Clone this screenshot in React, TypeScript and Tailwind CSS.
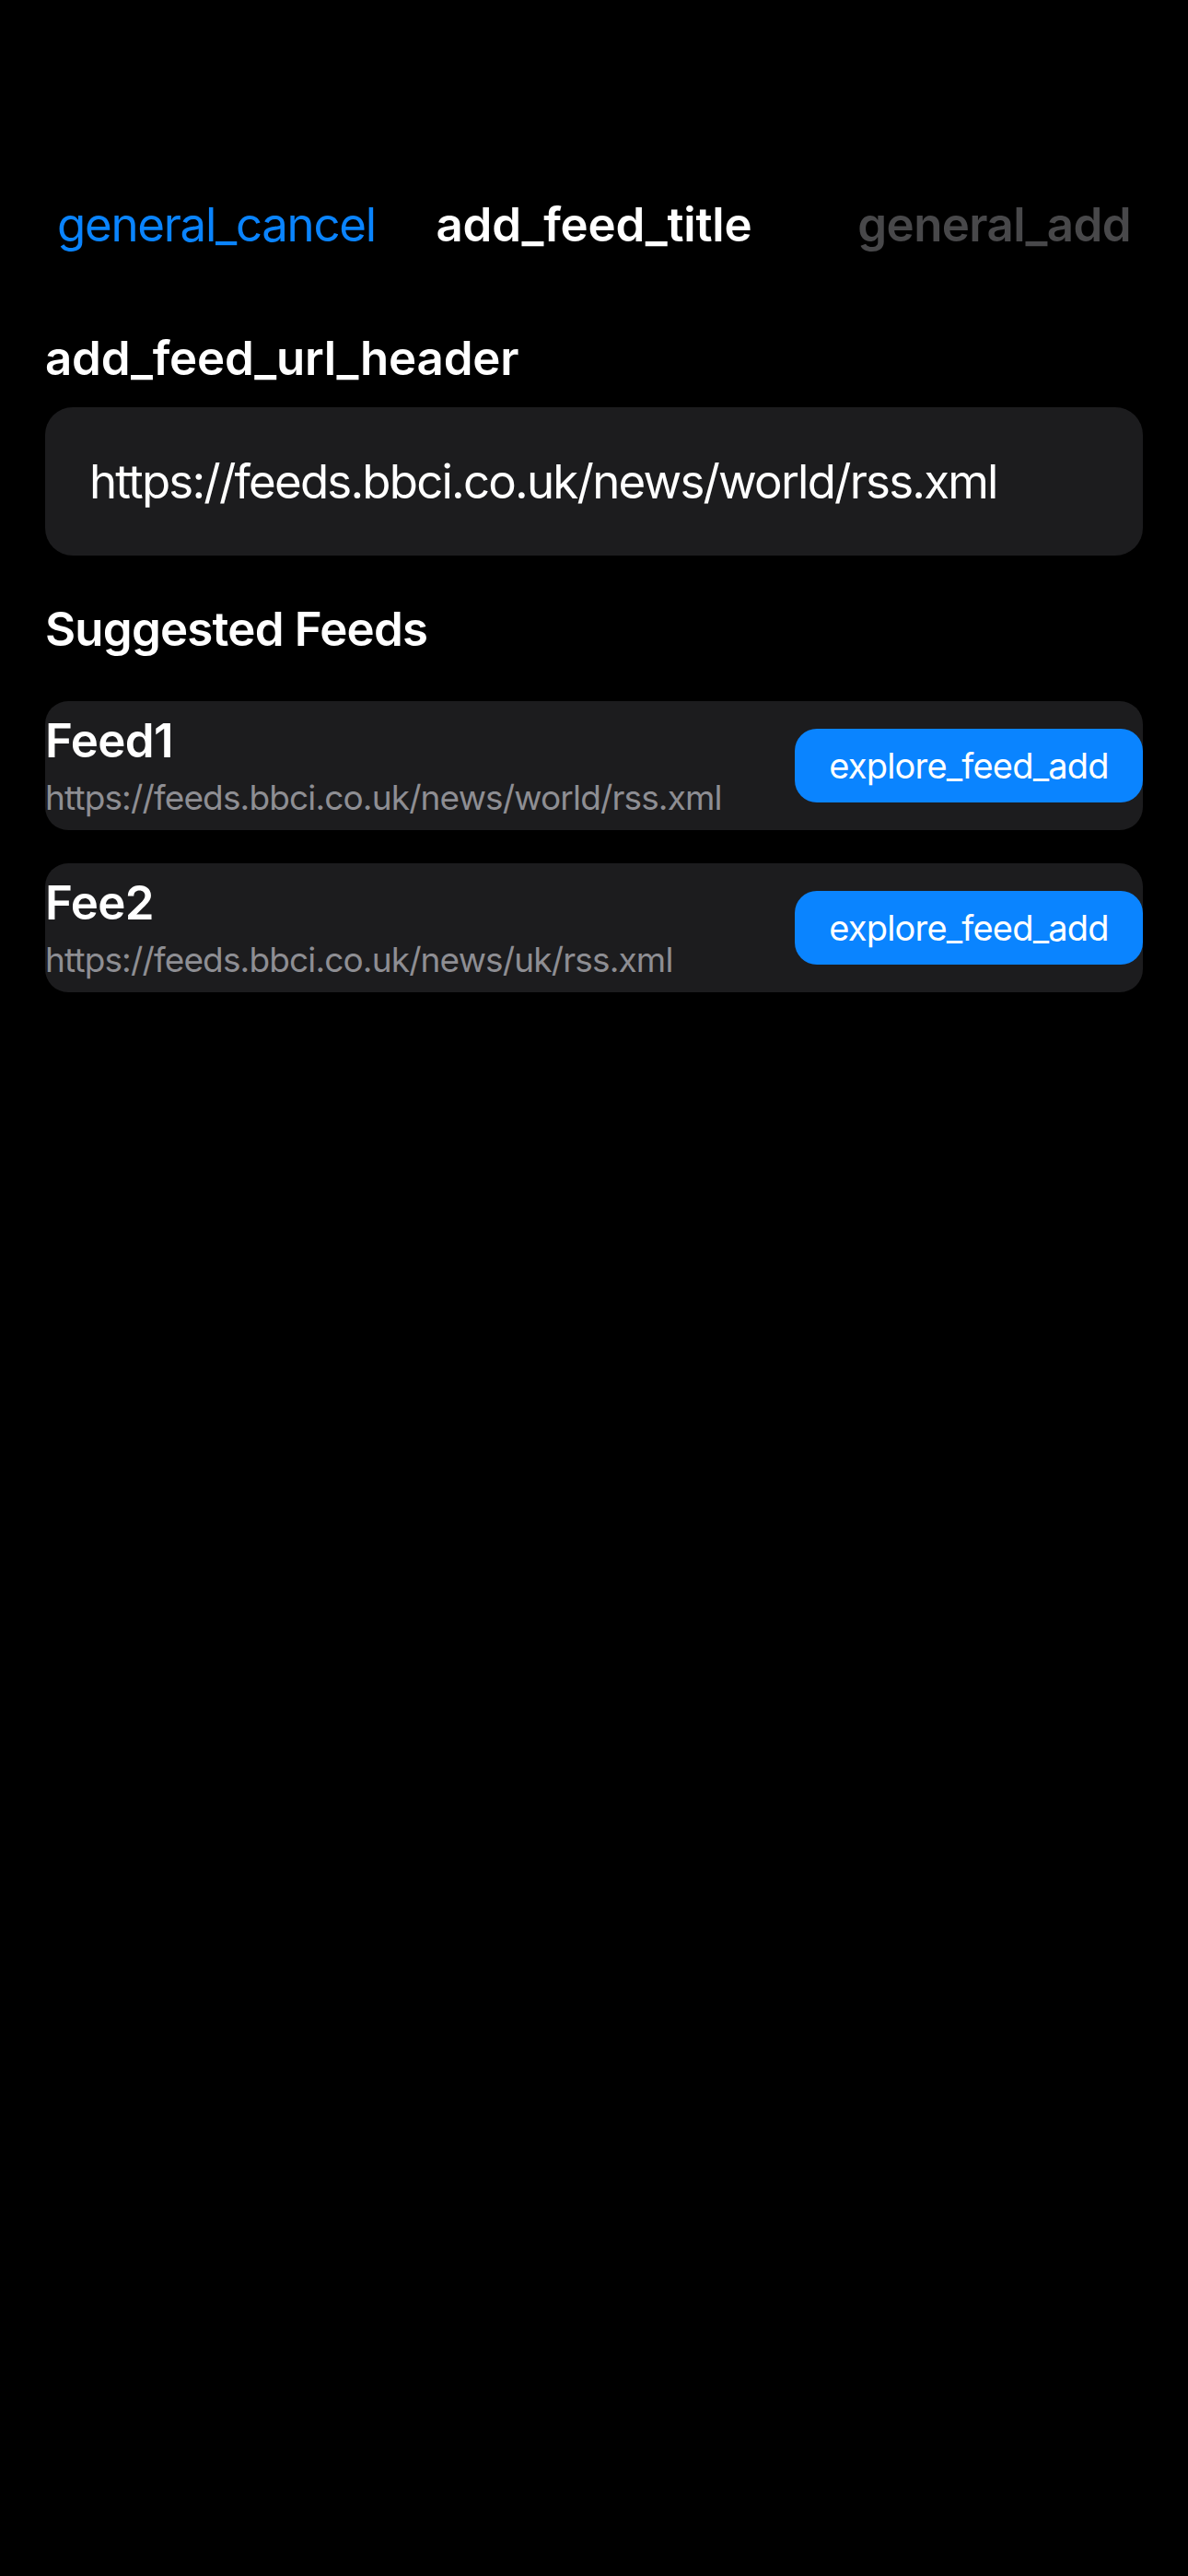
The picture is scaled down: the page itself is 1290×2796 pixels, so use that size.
const feeds = [
  { name: "Feed1", url: "https://feeds.bbci.co.uk/news/world/rss.xml" },
  { name: "Fee2", url: "https://feeds.bbci.co.uk/news/uk/rss.xml" }
];

const FeedRow = ({ name, url }: { name: string; url: string }) => (
  <div className="flex items-center justify-between rounded-[25px] bg-[#1c1c1e] py-[12px]">
    <div className="flex flex-col">
      <span className="text-[51px] leading-[61px] font-semibold tracking-[-0.6px] text-white">{name}</span>
      <span className="mt-[9px] text-[37px] leading-[46px] tracking-[-0.85px] text-[#8e8e93]">{url}</span>
    </div>
    <button className="flex h-[80px] w-[378px] items-center justify-center rounded-[24px] bg-[#0a84ff] text-[38px] tracking-[-0.8px] text-white">
      explore_feed_add
    </button>
  </div>
);

export default function App() {
  return (
    <div className="min-h-[2796px] w-[1290px] bg-black font-['Inter',sans-serif] antialiased">
      <div className="grid grid-cols-[1fr_auto_1fr] items-center px-[62px] pt-[213px] text-[51px] leading-[61px]">
        <span className="tracking-[-1.3px] text-[#0a84ff]">general_cancel</span>
        <span className="font-semibold tracking-[-0.2px] text-white">add_feed_title</span>
        <span className="text-right font-semibold tracking-[-0.6px] text-[#48484a]">general_add</span>
      </div>

      <div className="px-[49px]">
        <h2 className="mt-[84px] text-[51px] leading-[61px] font-semibold tracking-[-0.2px] text-white">
          add_feed_url_header
        </h2>
        <div className="mt-[23px] flex h-[161px] items-center rounded-[30px] bg-[#1c1c1e] px-[48px]">
          <span className="text-[51px] leading-[61px] tracking-[-1.8px] text-white">
            https://feeds.bbci.co.uk/news/world/rss.xml
          </span>
        </div>

        <h2 className="mt-[49px] text-[51px] leading-[61px] font-semibold tracking-[-0.8px] text-white">
          Suggested Feeds
        </h2>
        <div className="mt-[48px] flex flex-col gap-[36px]">
          {feeds.map(feed => (
            <FeedRow key={feed.name} {...feed} />
          ))}
        </div>
      </div>
    </div>
  );
}
